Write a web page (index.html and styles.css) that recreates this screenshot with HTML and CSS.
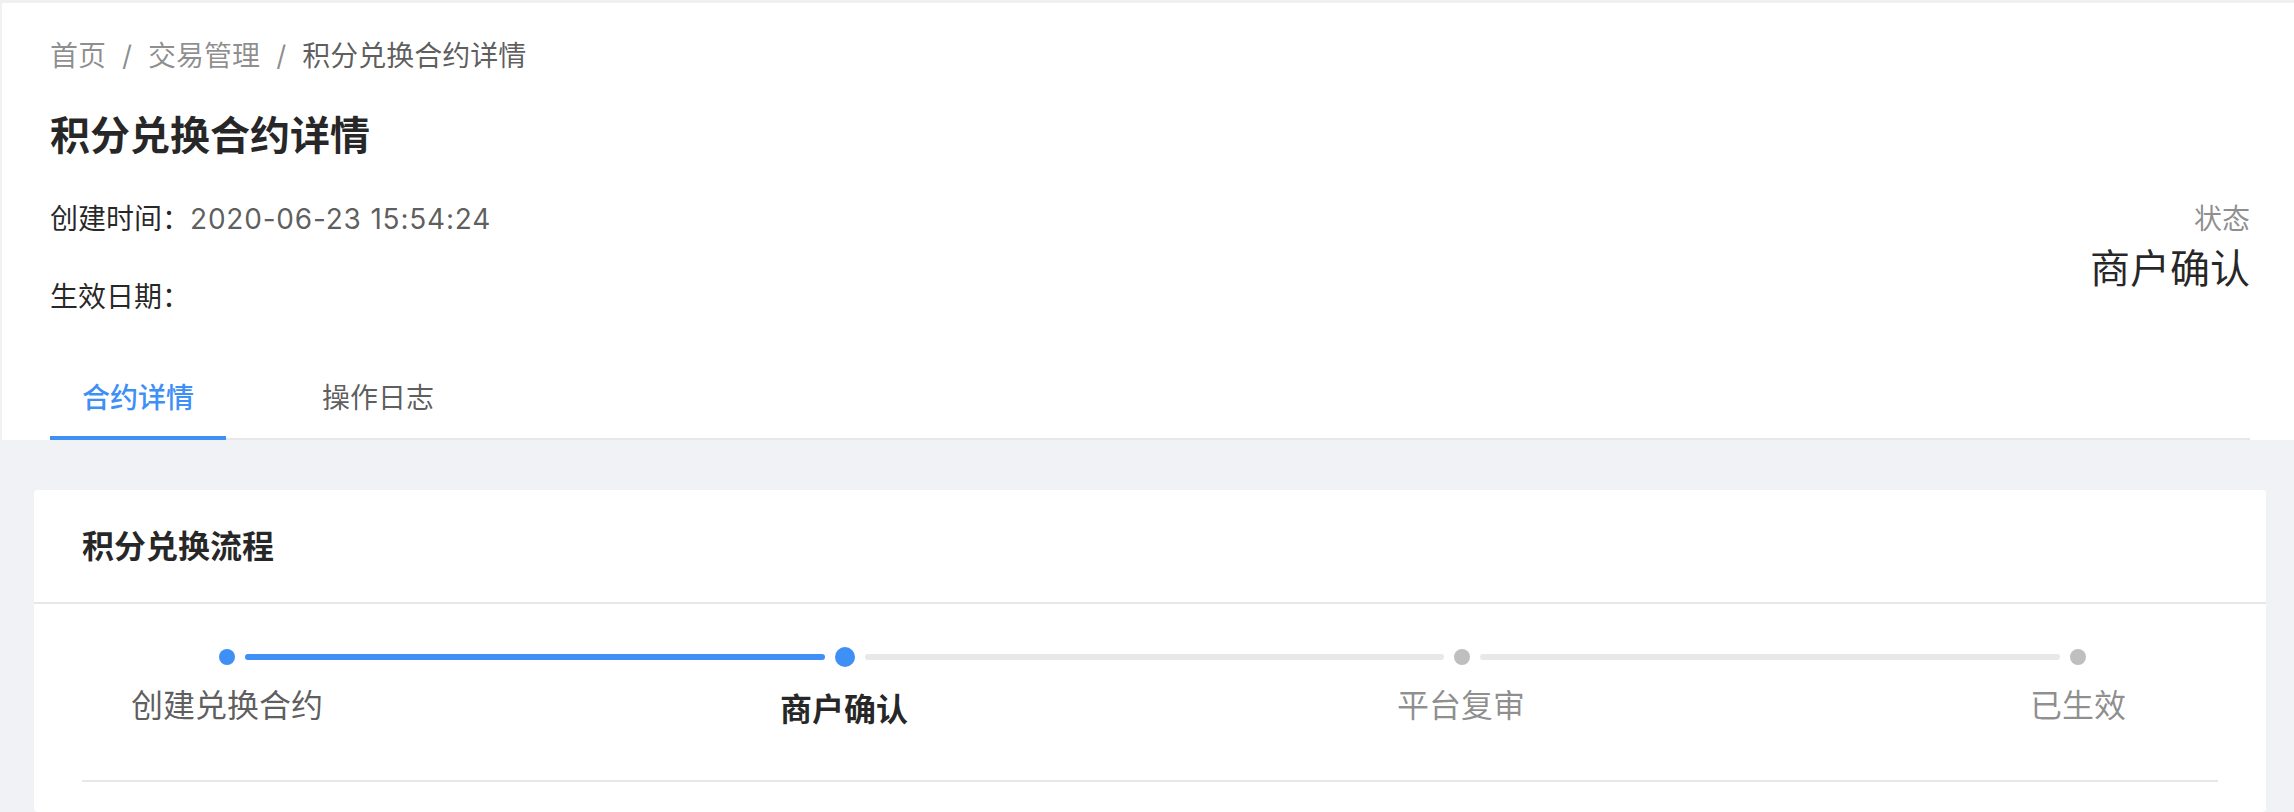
FILE: index.html
```html
<!DOCTYPE html>
<html lang="zh-CN">
<head>
<meta charset="utf-8">
<title>积分兑换合约详情</title>
<link rel="stylesheet" href="styles.css">
</head>
<body>
<div class="page-header">
  <div class="breadcrumb">
    <span class="crumb">首页</span><span class="sep">/</span><span class="crumb">交易管理</span><span class="sep">/</span><span class="crumb current">积分兑换合约详情</span>
  </div>
  <h1 class="title">积分兑换合约详情</h1>
  <div class="content">
    <div class="desc">
      <div class="desc-row"><span class="desc-label">创建时间：</span><span class="desc-value">2020-06-23 15:54:24</span></div>
      <div class="desc-row"><span class="desc-label">生效日期：</span><span class="desc-value"></span></div>
    </div>
    <div class="status">
      <div class="status-label">状态</div>
      <div class="status-value">商户确认</div>
    </div>
  </div>
  <div class="tabs">
    <div class="tab active">合约详情</div>
    <div class="tab">操作日志</div>
  </div>
</div>
<div class="main">
  <div class="card">
    <div class="card-head">积分兑换流程</div>
    <div class="card-body">
      <div class="steps">
        <div class="dot-row">
          <span class="pad"></span>
          <span class="dot done"></span>
          <span class="line done"></span>
          <span class="dot current"></span>
          <span class="line"></span>
          <span class="dot"></span>
          <span class="line"></span>
          <span class="dot"></span>
          <span class="pad"></span>
        </div>
        <div class="labels">
          <div class="label done">创建兑换合约</div>
          <div class="label current">商户确认</div>
          <div class="label">平台复审</div>
          <div class="label">已生效</div>
        </div>
      </div>
      <div class="divider"></div>
    </div>
  </div>
</div>
</body>
</html>
```
FILE: styles.css
```css
html, body {
  margin: 0;
  padding: 0;
  overflow: hidden;
}
body {
  background: #f0f2f5;
  font-family: Inter, "Noto Sans CJK SC", sans-serif;
  color: rgba(0, 0, 0, 0.65);
  height: 812px;
}
.page-header {
  background: #fff;
  border-top: 3px solid #eef0f2;
  border-left: 2px solid #f0f1f3;
  padding: 31px 44px 0 48px;
}
.breadcrumb {
  font-size: 28px;
  line-height: 44px;
  color: rgba(0, 0, 0, 0.45);
}
.breadcrumb .sep {
  margin: 0 16px;
}
.breadcrumb .current {
  color: rgba(0, 0, 0, 0.65);
}
.title {
  margin: 26px 0 0;
  font-size: 40px;
  line-height: 64px;
  font-weight: 600;
  color: rgba(0, 0, 0, 0.85);
}
.content {
  display: flex;
  justify-content: space-between;
  align-items: flex-start;
  margin-top: 29px;
}
.desc-row {
  font-size: 28px;
  line-height: 44px;
  padding-bottom: 34px;
}
.desc-row:last-child {
  padding-bottom: 0;
}
.desc-label {
  color: rgba(0, 0, 0, 0.85);
}
.desc-value {
  color: rgba(0, 0, 0, 0.65);
  letter-spacing: 0.8px;
}
.status {
  text-align: right;
}
.status-label {
  font-size: 28px;
  line-height: 44px;
  color: rgba(0, 0, 0, 0.45);
}
.status-value {
  font-size: 40px;
  line-height: 56px;
  color: rgba(0, 0, 0, 0.85);
}
.tabs {
  display: flex;
  margin-top: 33px;
  border-bottom: 2px solid #e8e8e8;
}
.tab {
  padding: 24px 32px 16px;
  margin-right: 64px;
  margin-bottom: -2px;
  font-size: 28px;
  line-height: 44px;
  color: rgba(0, 0, 0, 0.65);
  border-bottom: 4px solid transparent;
}
.tab.active {
  color: #3e8ff6;
  border-bottom-color: #3e8ff6;
  font-weight: 500;
}
.main {
  padding: 50px 28px 0 34px;
}
.card {
  background: #fff;
  border-radius: 4px;
}
.card-head {
  padding: 33px 48px 31px;
  font-size: 32px;
  line-height: 48px;
  font-weight: 600;
  color: rgba(0, 0, 0, 0.85);
  border-bottom: 2px solid #e8e8e8;
}
.card-body {
  padding: 0 48px 30px;
}
.steps {
  padding: 43px 0 0 5px;
}
.dot-row {
  display: flex;
  align-items: center;
  height: 20px;
}
.pad {
  width: 132px;
  flex: none;
}
.dot {
  flex: none;
  width: 16px;
  height: 16px;
  border-radius: 50%;
  background: #bfbfbf;
}
.dot.done {
  background: #3e8ff6;
}
.dot.current {
  width: 20px;
  height: 20px;
  background: #3e8ff6;
}
.line {
  flex: 1;
  height: 6px;
  margin: 0 10px;
  border-radius: 3px;
  background: #e8e8e8;
}
.line.done {
  background: #3e8ff6;
}
.labels {
  display: grid;
  grid-template-columns: 1fr 1fr 1fr 280px;
  align-items: start;
  margin-top: 15px;
}
.label {
  width: 280px;
  text-align: center;
  font-size: 32px;
  line-height: 48px;
  color: rgba(0, 0, 0, 0.45);
}
.label.done {
  color: rgba(0, 0, 0, 0.65);
}
.label.current {
  padding-top: 4px;
  color: rgba(0, 0, 0, 0.85);
  font-weight: 600;
}
.divider {
  margin-top: 46px;
  height: 2px;
  background: #e8e8e8;
}
```
